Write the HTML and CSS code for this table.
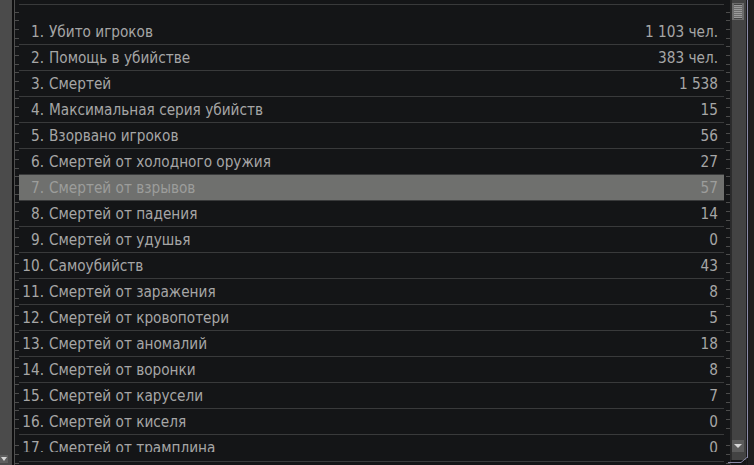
FILE: index.html
```html
<!DOCTYPE html>
<html lang="ru">
<head>
<meta charset="utf-8">
<link rel="stylesheet" href="styles.css">
</head>
<body>
<div class="lside">
  <div class="lbar"><div class="larrow"><span class="tri"></span></div></div>
  <div class="ldiv"></div>
  <div class="ticks lticks"></div>
</div>
<div class="main">
  <div class="hline top"></div>
  <div class="list">
    <div class="row"><span class="num">1.</span><span class="label">Убито игроков</span><span class="val">1 103 чел.</span></div>
    <div class="row"><span class="num">2.</span><span class="label">Помощь в убийстве</span><span class="val">383 чел.</span></div>
    <div class="row"><span class="num">3.</span><span class="label">Смертей</span><span class="val">1 538</span></div>
    <div class="row"><span class="num">4.</span><span class="label">Максимальная серия убийств</span><span class="val">15</span></div>
    <div class="row"><span class="num">5.</span><span class="label">Взорвано игроков</span><span class="val">56</span></div>
    <div class="row"><span class="num">6.</span><span class="label">Смертей от холодного оружия</span><span class="val">27</span></div>
    <div class="row sel"><span class="num">7.</span><span class="label">Смертей от взрывов</span><span class="val">57</span></div>
    <div class="row"><span class="num">8.</span><span class="label">Смертей от падения</span><span class="val">14</span></div>
    <div class="row"><span class="num">9.</span><span class="label">Смертей от удушья</span><span class="val">0</span></div>
    <div class="row"><span class="num">10.</span><span class="label">Самоубийств</span><span class="val">43</span></div>
    <div class="row"><span class="num">11.</span><span class="label">Смертей от заражения</span><span class="val">8</span></div>
    <div class="row"><span class="num">12.</span><span class="label">Смертей от кровопотери</span><span class="val">5</span></div>
    <div class="row"><span class="num">13.</span><span class="label">Смертей от аномалий</span><span class="val">18</span></div>
    <div class="row"><span class="num">14.</span><span class="label">Смертей от воронки</span><span class="val">8</span></div>
    <div class="row"><span class="num">15.</span><span class="label">Смертей от карусели</span><span class="val">7</span></div>
    <div class="row"><span class="num">16.</span><span class="label">Смертей от киселя</span><span class="val">0</span></div>
    <div class="row"><span class="num">17.</span><span class="label">Смертей от трамплина</span><span class="val">0</span></div>
  </div>
  <div class="hline bottom"></div>
</div>
<div class="rside">
  <div class="ticks rticks"></div>
  <div class="track">
    <div class="thumb"></div>
    <div class="rarrow"><span class="tri"></span></div>
  </div>
  <div class="rgap"></div>
  <div class="rline"></div>
  <div class="redge"></div>
  <svg class="corner" width="24" height="10" viewBox="0 0 24 10"><path d="M21.5 0 L21.5 2 L15 7.5 L2 7.5" fill="none" stroke="#8a8aa6" stroke-width="1"/></svg>
</div>
</body>
</html>
```

FILE: styles.css
```css
html, body {
  margin: 0;
  padding: 0;
}
body {
  width: 754px;
  height: 465px;
  overflow: hidden;
  background: #141517;
  display: flex;
  font-family: "DejaVu Sans Condensed", "DejaVu Sans", sans-serif;
  font-size: 15.2px;
  color: #a6a6a6;
}
.lside {
  width: 19px;
  display: flex;
  flex: none;
}
.lbar {
  width: 12px;
  background: #4b4b4b;
  display: flex;
  flex-direction: column;
  justify-content: flex-end;
  padding-bottom: 2px;
  box-sizing: border-box;
}
.larrow {
  width: 8px;
  height: 8px;
  background: #5e5e5e;
  display: flex;
  align-items: center;
  justify-content: center;
}
.tri {
  width: 0;
  height: 0;
  border-left: 3px solid transparent;
  border-right: 3px solid transparent;
  border-top: 4px solid #d6d6d6;
}
.ldiv {
  width: 2px;
  background: #0d0d0e;
}
.ticks {
  background: repeating-linear-gradient(to bottom, transparent 0, transparent 7.67px, #4c4c4c 7.67px, #4c4c4c 8.67px);
  background-position: 0 4px;
}
.lticks {
  width: 4px;
  border-left: 1px solid #4f4f4f;
}
.main {
  width: 705px;
  flex: none;
  display: flex;
  flex-direction: column;
}
.hline {
  height: 1px;
  background: #393a3b;
  flex: none;
}
.top {
  margin-top: 4px;
}
.list {
  margin-top: 14px;
  height: 433px;
  overflow: hidden;
  flex: none;
}
.bottom {
  margin-top: 9px;
}
.row {
  height: 25px;
  border-bottom: 1px solid #393a3b;
  display: flex;
  align-items: center;
  padding-right: 6px;
  white-space: nowrap;
}
.row.sel {
  background: #6f706e;
  color: #9c9d9b;
}
.num {
  width: 25px;
  text-align: right;
  flex: none;
}
.label {
  margin-left: 5px;
  flex: 1;
}
.val {
  text-align: right;
}
.rside {
  flex: 1;
  display: flex;
  position: relative;
  padding-left: 2px;
}
.rticks {
  width: 4px;
  border-right: 1px solid #2a2a2b;
}
.track {
  width: 15px;
  background: #434343;
  border-left: 1px solid #2c2c2c;
  box-sizing: border-box;
  height: 460px;
  position: relative;
  display: flex;
  flex-direction: column;
  justify-content: space-between;
  padding: 3px 2px 8px 0;
}
.thumb {
  width: 12px;
  height: 17px;
  background: repeating-linear-gradient(to bottom, #6c6c6c 0, #6c6c6c 1px, #9a9a9a 1px, #9a9a9a 2px);
  background-clip: content-box;
  padding: 1px 0;
  box-sizing: border-box;
  border: 1px solid #6c6c6c;
  border-width: 1px 2px;
}
.rarrow {
  width: 12px;
  height: 12px;
  background: #5c5c5c;
  display: flex;
  align-items: center;
  justify-content: center;
}
.rarrow .tri {
  border-left-width: 4px;
  border-right-width: 4px;
  border-top-width: 4px;
}
.rgap {
  width: 1px;
  background: #1c1c1d;
}
.rline {
  width: 1px;
  background: #8a8aa6;
  height: 458px;
}
.redge {
  flex: 1;
  background: #1d1d1e;
}
.corner {
  position: absolute;
  right: 4px;
  bottom: 0;
}
```
